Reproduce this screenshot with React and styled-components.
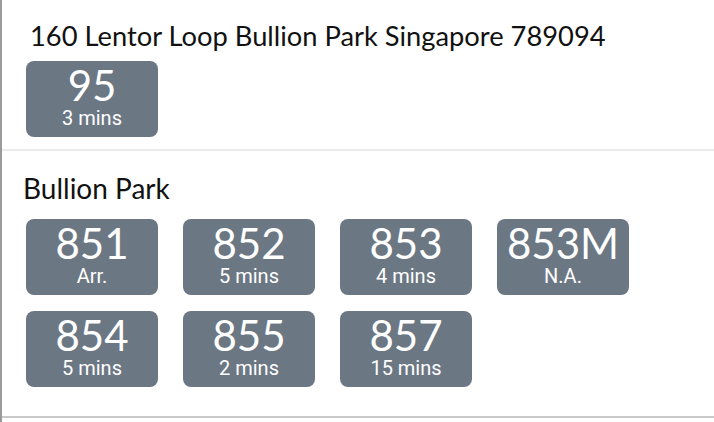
import React from "react";
import styled, { createGlobalStyle } from "styled-components";

const Global = createGlobalStyle`
  html, body { margin: 0; padding: 0; background: #fff; }
  body { font-family: Lato, "Noto Sans", sans-serif; }
`;

const Page = styled.div`
  width: 714px;
  height: 422px;
  box-sizing: border-box;
  border-left: 2px solid #9a9a9a;
  background: #fff;
  overflow: hidden;
`;

const Section = styled.section`
  box-sizing: border-box;
  padding: ${(p) => p.$pad};
  border-bottom: 2px solid ${(p) => p.$line};
`;

const Title = styled.h2`
  margin: 0 0 ${(p) => p.$gap}px ${(p) => p.$indent}px;
  font-family: Lato, sans-serif;
  font-weight: 400;
  font-size: ${(p) => p.$size}px;
  line-height: 30px;
  color: #111;
  white-space: nowrap;
`;

const Grid = styled.div`
  display: grid;
  grid-template-columns: repeat(4, 132px);
  column-gap: 25px;
  row-gap: 16px;
`;

const Card = styled.div`
  width: 132px;
  height: 76px;
  box-sizing: border-box;
  padding-top: 2px;
  border-radius: 8px;
  background: #6c7784;
  color: #fff;
  display: flex;
  flex-direction: column;
  align-items: center;
`;

const Num = styled.div`
  font-family: Lato, sans-serif;
  font-size: 42px;
  line-height: 44px;
  font-weight: 400;
`;

const Eta = styled.div`
  margin-top: 1px;
  font-family: Roboto, sans-serif;
  font-size: 20px;
  font-weight: 400;
  line-height: 20px;
`;

const Bus = ({ n, t }) => (
  <Card>
    <Num>{n}</Num>
    <Eta>{t}</Eta>
  </Card>
);

const buses = [
  ["851", "Arr."],
  ["852", "5 mins"],
  ["853", "4 mins"],
  ["853M", "N.A."],
  ["854", "5 mins"],
  ["855", "2 mins"],
  ["857", "15 mins"],
];

export default function App() {
  return (
    <>
      <Global />
      <Page>
        <Section $pad="21px 0 12px 24px" $line="#ebebeb">
          <Title $gap={10} $indent={4} $size={27.3}>
            160 Lentor Loop Bullion Park Singapore 789094
          </Title>
          <Grid>
            <Bus n="95" t="3 mins" />
          </Grid>
        </Section>
        <Section $pad="22px 0 29px 24px" $line="#c8c8c8">
          <Title $gap={16} $indent={-3} $size={28}>
            Bullion Park
          </Title>
          <Grid>
            {buses.map(([n, t]) => (
              <Bus key={n} n={n} t={t} />
            ))}
          </Grid>
        </Section>
      </Page>
    </>
  );
}
